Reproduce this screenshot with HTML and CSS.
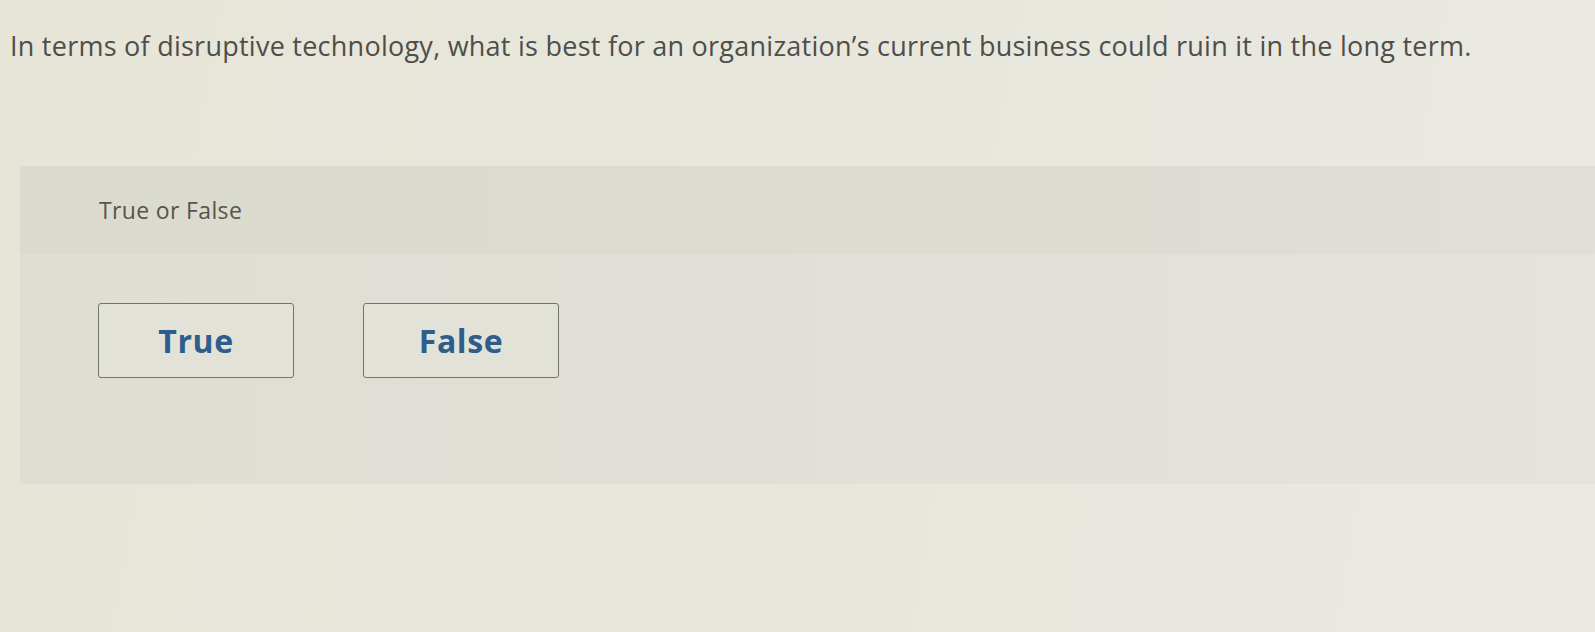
FILE: index.html
```html
<!DOCTYPE html>
<html>
<head>
    <title>True or False</title>
    <link rel="stylesheet" href="styles.css">
</head>
<body>
    <div class="page">
        <p class="question">In terms of disruptive technology, what is best for an organization’s current business could ruin it in the long term.</p>

        <div class="panel">
            <div class="panel-head">True or False</div>
            <div class="panel-body">
                <button class="choice">True</button>
                <button class="choice">False</button>
            </div>
        </div>
    </div>
</body>
</html>
```

FILE: styles.css
```css
body {
    margin: 0;
    font-family: 'Open Sans', 'Lato', sans-serif;
    background: linear-gradient(100deg, #e7e5d7 0%, #e8e7dd 55%, #eae9e3 100%);
    min-height: 632px;
    overflow: hidden;
}

.page {
    padding: 0 0 0 10px;
}

.question {
    margin: 0;
    padding-top: 29px;
    font-size: 27px;
    line-height: 34px;
    color: #4e4e4a;
    letter-spacing: 0.25px;
}

.panel {
    margin: 103px 0 0 10px;
}

.panel-head {
    height: 88px;
    display: flex;
    align-items: center;
    padding-left: 79px;
    font-size: 23px;
    letter-spacing: 0.35px;
    color: #55554f;
    background: linear-gradient(90deg, #dbdacf 0%, #dddcd2 60%, #dfded8 100%);
}

.panel-body {
    height: 230px;
    box-sizing: border-box;
    padding: 49px 0 0 78px;
    display: flex;
    gap: 69px;
    align-items: flex-start;
    background: linear-gradient(90deg, #dfded4 0%, #e1e0d9 60%, #e4e3de 100%);
}

.choice {
    width: 196px;
    height: 75px;
    border: 1.5px solid #73736d;
    border-radius: 3px;
    background: #e3e2d9;
    font-family: 'Open Sans', 'Lato', sans-serif;
    font-weight: 700;
    font-size: 32px;
    letter-spacing: 0.6px;
    color: #2e5d8c;
    padding: 0 0 1px 0;
}
```
